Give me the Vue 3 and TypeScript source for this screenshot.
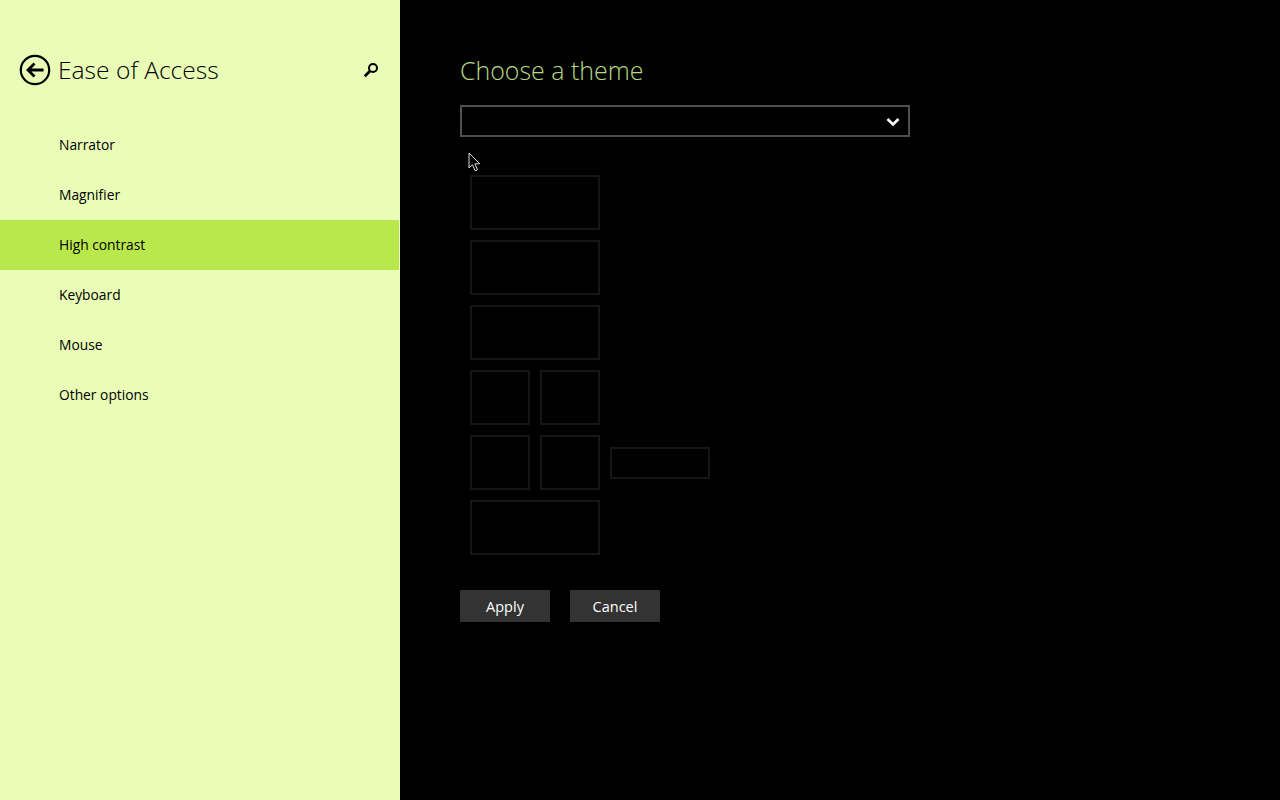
<template>
  <div class="page">
    <aside class="sidebar">
      <header class="side-head">
        <button class="back" type="button" aria-label="Back">
          <svg width="32" height="32" viewBox="0 0 32 32" fill="none" stroke="#000">
            <circle cx="16" cy="16" r="14.2" stroke-width="2.2" />
            <path d="M24.500 16H9.500M15.500 9.500 9 16l6.500 6.500" stroke-width="2.800" />
          </svg>
        </button>
        <h1>Ease of Access</h1>
        <svg class="search" width="16" height="16" viewBox="0 0 16 16" fill="none" stroke="#000">
          <circle cx="10" cy="6" r="4" stroke-width="2" />
          <path d="M7 9 1.800 14.200" stroke-width="2.800" />
        </svg>
      </header>
      <nav class="menu">
        <a v-for="item in menu" :key="item" class="item" :class="{ active: item === current }">{{ item }}</a>
      </nav>
    </aside>

    <main class="content">
      <h2>Choose a theme</h2>
      <div class="select">
        <svg width="14" height="10" viewBox="0 0 14 10" fill="none" stroke="#fff" stroke-width="2.600">
          <path d="M1.500 2 7 7.500 12.500 2" />
        </svg>
      </div>

      <div class="previews">
        <div class="box wide"></div>
        <div class="box wide"></div>
        <div class="box wide"></div>
        <div class="pair">
          <div class="box small"></div>
          <div class="box small"></div>
        </div>
        <div class="pair">
          <div class="box small"></div>
          <div class="box small"></div>
          <div class="box field"></div>
        </div>
        <div class="box wide"></div>
      </div>

      <div class="actions">
        <button type="button">Apply</button>
        <button type="button">Cancel</button>
      </div>

      <svg class="cursor" width="14" height="20" viewBox="0 0 14 20">
        <path d="M1 1v15l3.500-3.300 2.600 6 2.400-1-2.600-5.900h4.800z" fill="#000" stroke="#ddd" stroke-width="1" />
      </svg>
    </main>
  </div>
</template>

<script setup lang="ts">
const menu: string[] = ['Narrator', 'Magnifier', 'High contrast', 'Keyboard', 'Mouse', 'Other options']
const current = 'High contrast'
</script>

<style scoped>
.page {
  display: flex;
  width: 1280px;
  height: 800px;
  overflow: hidden;
  background: #000;
  font-family: "Open Sans", "Noto Sans", sans-serif;
}

.sidebar {
  flex: none;
  width: 400px;
  background: #e9fdb7;
  color: #000;
}

.side-head {
  display: flex;
  align-items: center;
  height: 40px;
  margin-top: 50px;
  padding: 0 20px 0 19px;
}

.back {
  display: flex;
  flex: none;
  margin-right: 7px;
  padding: 0;
  border: 0;
  background: none;
}

h1 {
  flex: 1;
  margin: 0;
  font-size: 24.600px;
  font-weight: 300;
  line-height: 40px;
}

.search {
  flex: none;
  margin-right: 1px;
  margin-top: -1px;
}

.menu {
  display: flex;
  flex-direction: column;
  margin-top: 30px;
}

.item {
  width: 399px;
  height: 50px;
  padding-left: 59px;
  box-sizing: border-box;
  font-size: 13.800px;
  line-height: 49px;
}

.item.active {
  background: #b9e84c;
}

.content {
  position: relative;
  flex: 1;
  padding: 50px 0 0 60px;
}

h2 {
  margin: 0;
  color: #b8d884;
  font-size: 24.950px;
  font-weight: 300;
  line-height: 40px;
}

.select {
  display: flex;
  align-items: center;
  justify-content: flex-end;
  box-sizing: border-box;
  width: 450px;
  height: 32px;
  margin-top: 15px;
  padding: 2px 8px 0 0;
  border: 2px solid #4f4f4f;
}

.previews {
  display: flex;
  flex-direction: column;
  gap: 10px;
  margin: 38px 0 0 10px;
}

.pair {
  display: flex;
  align-items: center;
  gap: 10px;
}

.box {
  box-sizing: border-box;
  height: 55px;
  border: 2px solid #161616;
}

.wide {
  width: 130px;
}

.small {
  width: 60px;
}

.field {
  width: 100px;
  height: 32px;
}

.actions {
  display: flex;
  gap: 20px;
  margin-top: 35px;
}

.actions button {
  width: 90px;
  height: 32px;
  padding: 0;
  border: 0;
  background: #333;
  color: #fff;
  font-family: inherit;
  font-size: 14.500px;
  font-weight: 500;
}

.cursor {
  position: absolute;
  left: 68px;
  top: 152px;
}
</style>
